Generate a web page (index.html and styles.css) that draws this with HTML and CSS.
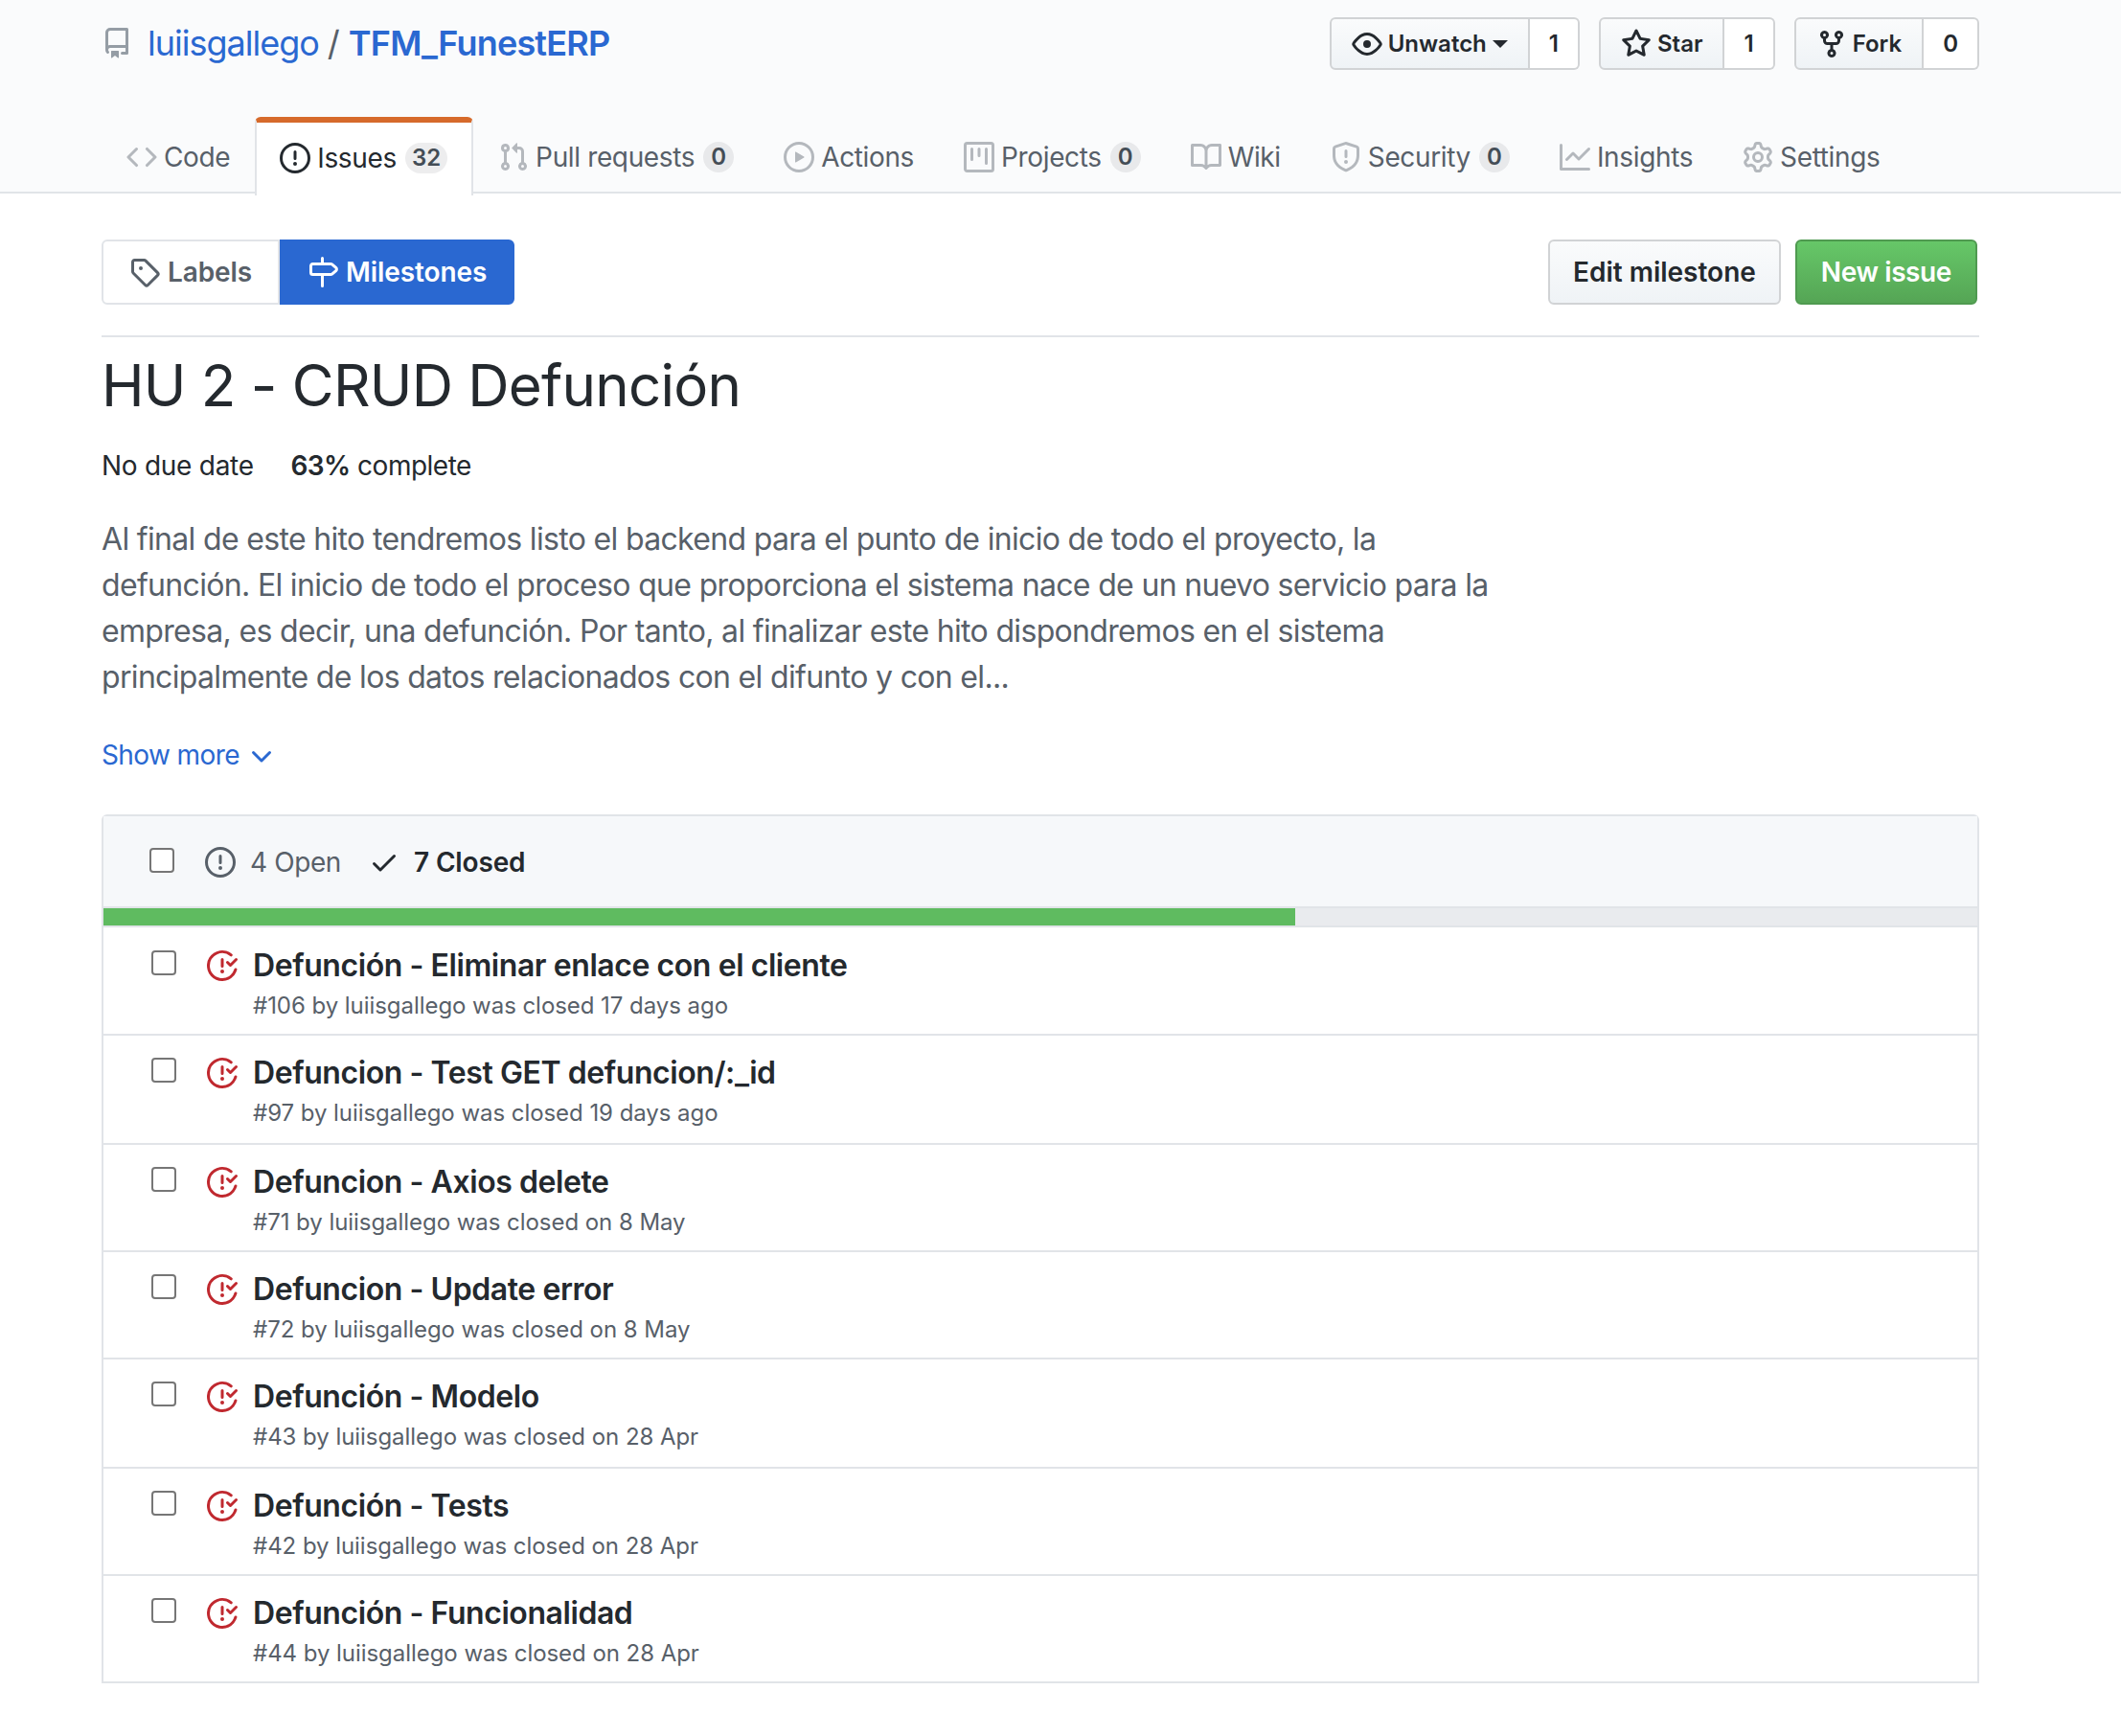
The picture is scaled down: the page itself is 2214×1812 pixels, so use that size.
FILE: index.html
```html
<!DOCTYPE html>
<html lang="en">
<head>
    <meta charset="UTF-8">
    <title>HU 2 - CRUD Defunción · luiisgallego/TFM_FunestERP</title>
    <link rel="stylesheet" href="styles.css">
</head>
<body>

    <svg class="sprites" xmlns="http://www.w3.org/2000/svg">
        <symbol id="i-repo" viewBox="0 0 16 16"><path fill-rule="evenodd" d="M2 2.5A2.5 2.5 0 014.5 0h8.75a.75.75 0 01.75.75v12.5a.75.75 0 01-.75.75h-2.5a.75.75 0 110-1.5h1.75v-2h-8a1 1 0 00-.714 1.7.75.75 0 01-1.072 1.05A2.495 2.495 0 012 11.5v-9zm10.5-1V9h-8c-.356 0-.694.074-1 .208V2.5a1 1 0 011-1h8zM5 12.25v3.25a.25.25 0 00.4.2l1.45-1.087a.25.25 0 01.3 0L8.6 15.7a.25.25 0 00.4-.2v-3.25a.25.25 0 00-.25-.25h-3.5a.25.25 0 00-.25.25z"/></symbol>
        <symbol id="i-code" viewBox="0 0 16 16"><path fill-rule="evenodd" d="M4.72 3.22a.75.75 0 011.06 1.06L2.06 8l3.72 3.72a.75.75 0 11-1.06 1.06L.47 8.53a.75.75 0 010-1.06l4.25-4.25zm6.56 0a.75.75 0 10-1.06 1.06L13.94 8l-3.72 3.72a.75.75 0 101.06 1.06l4.25-4.25a.75.75 0 000-1.06l-4.25-4.25z"/></symbol>
        <symbol id="i-issue" viewBox="0 0 16 16"><path fill-rule="evenodd" d="M8 1.5a6.5 6.5 0 100 13 6.5 6.5 0 000-13zM0 8a8 8 0 1116 0A8 8 0 010 8zm9 3a1 1 0 11-2 0 1 1 0 012 0zm-.25-6.25a.75.75 0 00-1.5 0v3.5a.75.75 0 001.5 0v-3.5z"/></symbol>
        <symbol id="i-pr" viewBox="0 0 16 16"><path fill-rule="evenodd" d="M7.177 3.073L9.573.677A.25.25 0 0110 .854v4.792a.25.25 0 01-.427.177L7.177 3.427a.25.25 0 010-.354zM3.75 2.5a.75.75 0 100 1.5.75.75 0 000-1.5zm-2.25.75a2.25 2.25 0 113 2.122v5.256a2.251 2.251 0 11-1.5 0V5.372A2.25 2.25 0 011.5 3.25zM11 2.5h-1V4h1a1 1 0 011 1v5.628a2.251 2.251 0 101.5 0V5A2.5 2.5 0 0011 2.5zm1 10.25a.75.75 0 111.5 0 .75.75 0 01-1.5 0zM3.75 12a.75.75 0 100 1.5.75.75 0 000-1.5z"/></symbol>
        <symbol id="i-play" viewBox="0 0 16 16"><path fill-rule="evenodd" d="M1.5 8a6.5 6.5 0 1113 0 6.5 6.5 0 01-13 0zM8 0a8 8 0 100 16A8 8 0 008 0zM6.379 5.227A.25.25 0 006 5.442v5.117a.25.25 0 00.379.214l4.264-2.559a.25.25 0 000-.428L6.379 5.227z"/></symbol>
        <symbol id="i-project" viewBox="0 0 16 16"><path fill-rule="evenodd" d="M1.75 0A1.75 1.75 0 000 1.75v12.5C0 15.216.784 16 1.75 16h12.5A1.75 1.75 0 0016 14.25V1.75A1.75 1.75 0 0014.25 0H1.75zM1.5 1.75a.25.25 0 01.25-.25h12.5a.25.25 0 01.25.25v12.5a.25.25 0 01-.25.25H1.75a.25.25 0 01-.25-.25V1.75zM11.75 3a.75.75 0 00-.75.75v7.5a.75.75 0 001.5 0v-7.5a.75.75 0 00-.75-.75zm-8.25.75a.75.75 0 011.5 0v5.5a.75.75 0 01-1.5 0v-5.5zM8 3a.75.75 0 00-.75.75v3.5a.75.75 0 001.5 0v-3.5A.75.75 0 008 3z"/></symbol>
        <symbol id="i-book" viewBox="0 0 16 16"><path fill-rule="evenodd" d="M0 1.75A.75.75 0 01.75 1h4.253c1.227 0 2.317.59 3 1.501A3.744 3.744 0 0111.006 1h4.245a.75.75 0 01.75.75v10.5a.75.75 0 01-.75.75h-4.507a2.25 2.25 0 00-1.591.659l-.622.621a.75.75 0 01-1.06 0l-.622-.621A2.25 2.25 0 005.258 13H.75a.75.75 0 01-.75-.75V1.75zm8.755 3a2.25 2.25 0 012.25-2.25H14.5v9h-3.757c-.71 0-1.4.201-1.992.572l.004-7.322zm-1.504 7.324l.004-5.073-.002-2.253A2.25 2.25 0 005.003 2.5H1.5v9h3.757a3.75 3.75 0 011.994.574z"/></symbol>
        <symbol id="i-shield" viewBox="0 0 16 16"><path fill-rule="evenodd" d="M7.467.133a1.75 1.75 0 011.066 0l5.25 1.68A1.75 1.75 0 0115 3.48V7c0 1.566-.32 3.182-1.303 4.682-.983 1.498-2.585 2.813-5.032 3.855a1.7 1.7 0 01-1.33 0c-2.447-1.042-4.049-2.357-5.032-3.855C1.32 10.182 1 8.566 1 7V3.48a1.75 1.75 0 011.217-1.667l5.25-1.68zm.61 1.429a.25.25 0 00-.153 0l-5.25 1.68a.25.25 0 00-.174.238V7c0 1.358.275 2.666 1.057 3.86.784 1.194 2.121 2.34 4.366 3.297a.2.2 0 00.154 0c2.245-.956 3.582-2.104 4.366-3.298C13.225 9.666 13.5 8.36 13.5 7V3.48a.25.25 0 00-.174-.237l-5.25-1.68zM9 10.5a1 1 0 11-2 0 1 1 0 012 0zm-.25-5.75a.75.75 0 10-1.5 0v3a.75.75 0 001.5 0v-3z"/></symbol>
        <symbol id="i-graph" viewBox="0 0 16 16"><path fill-rule="evenodd" d="M1.5 1.75a.75.75 0 00-1.5 0v12.5c0 .414.336.75.75.75h14.5a.75.75 0 000-1.5H1.5V1.75zm14.28 2.53a.75.75 0 00-1.06-1.06L10 7.94 7.53 5.47a.75.75 0 00-1.06 0L3.22 8.72a.75.75 0 001.06 1.06L7 7.06l2.47 2.47a.75.75 0 001.06 0l5.25-5.25z"/></symbol>
        <symbol id="i-gear" viewBox="0 0 16 16"><path fill-rule="evenodd" d="M7.429 1.525a6.593 6.593 0 011.142 0c.036.003.108.036.137.146l.289 1.105c.147.56.55.967.997 1.189.174.086.341.183.501.29.417.278.97.423 1.53.27l1.102-.303c.11-.03.175.016.195.046.219.31.41.641.573.989.014.031.022.11-.059.19l-.815.806c-.411.406-.562.957-.53 1.456a4.588 4.588 0 010 .582c-.032.499.119 1.05.53 1.456l.815.806c.08.08.073.159.059.19a6.494 6.494 0 01-.573.99c-.02.029-.086.074-.195.045l-1.103-.303c-.559-.153-1.112-.008-1.529.27-.16.107-.327.204-.5.29-.449.222-.851.628-.998 1.189l-.289 1.105c-.029.11-.101.143-.137.146a6.613 6.613 0 01-1.142 0c-.036-.003-.108-.037-.137-.146l-.289-1.105c-.147-.56-.55-.967-.997-1.189a4.502 4.502 0 01-.501-.29c-.417-.278-.97-.423-1.53-.27l-1.102.303c-.11.03-.175-.016-.195-.046a6.492 6.492 0 01-.573-.989c-.014-.031-.022-.11.059-.19l.815-.806c.411-.406.562-.957.53-1.456a4.587 4.587 0 010-.582c.032-.499-.119-1.05-.53-1.456l-.815-.806c-.08-.08-.073-.159-.059-.19a6.44 6.44 0 01.573-.99c.02-.029.086-.075.195-.045l1.103.303c.559.153 1.112.008 1.529-.27.16-.107.327-.204.5-.29.449-.222.851-.628.998-1.189l.289-1.105c.029-.11.101-.143.137-.146zM8 0c-.236 0-.47.01-.701.03-.743.065-1.29.615-1.458 1.261l-.29 1.106c-.017.066-.078.158-.211.224a5.994 5.994 0 00-.668.386c-.123.082-.233.09-.3.071L3.27 2.776c-.644-.177-1.392.02-1.82.63a7.977 7.977 0 00-.704 1.217c-.315.675-.111 1.422.363 1.891l.815.806c.05.048.098.147.088.294a6.084 6.084 0 000 .772c.01.147-.038.246-.088.294l-.815.806c-.474.469-.678 1.216-.363 1.891.2.428.436.835.704 1.218.428.609 1.176.806 1.82.63l1.103-.303c.066-.019.176-.011.299.071.213.143.436.272.668.386.133.066.194.158.212.224l.289 1.106c.169.646.715 1.196 1.458 1.26a8.094 8.094 0 001.402 0c.743-.064 1.29-.614 1.458-1.26l.29-1.106c.017-.066.078-.158.211-.224a5.98 5.98 0 00.668-.386c.123-.082.233-.09.3-.071l1.102.302c.644.177 1.392-.02 1.82-.63.268-.382.505-.789.704-1.217.315-.675.111-1.422-.364-1.891l-.814-.806c-.05-.048-.098-.147-.088-.294a6.1 6.1 0 000-.772c-.01-.147.039-.246.088-.294l.814-.806c.475-.469.679-1.216.364-1.891a7.992 7.992 0 00-.704-1.218c-.428-.609-1.176-.806-1.82-.63l-1.103.303c-.066.019-.176.011-.299-.071a5.991 5.991 0 00-.668-.386c-.133-.066-.194-.158-.212-.224L10.16 1.29C9.99.645 9.444.095 8.701.031A8.094 8.094 0 008 0zm1.5 8a1.5 1.5 0 11-3 0 1.5 1.5 0 013 0zM11 8a3 3 0 11-6 0 3 3 0 016 0z"/></symbol>
        <symbol id="i-eye" viewBox="0 0 16 16"><path fill-rule="evenodd" d="M1.679 7.932c.412-.621 1.242-1.75 2.366-2.717C5.175 4.242 6.527 3.5 8 3.5c1.473 0 2.824.742 3.955 1.715 1.124.967 1.954 2.096 2.366 2.717a.119.119 0 010 .136c-.412.621-1.242 1.75-2.366 2.717C10.825 11.758 9.473 12.5 8 12.5c-1.473 0-2.824-.742-3.955-1.715C2.92 9.818 2.09 8.69 1.679 8.068a.119.119 0 010-.136zM8 2c-1.981 0-3.67.992-4.933 2.078C1.797 5.169.88 6.423.43 7.1a1.619 1.619 0 000 1.798c.45.678 1.367 1.932 2.637 3.024C4.329 13.008 6.019 14 8 14c1.981 0 3.67-.992 4.933-2.078 1.27-1.091 2.187-2.345 2.637-3.023a1.619 1.619 0 000-1.798c-.45-.678-1.367-1.932-2.637-3.023C11.671 2.992 9.981 2 8 2zm0 8a2 2 0 100-4 2 2 0 000 4z"/></symbol>
        <symbol id="i-star" viewBox="0 0 16 16"><path fill-rule="evenodd" d="M8 .25a.75.75 0 01.673.418l1.882 3.815 4.21.612a.75.75 0 01.416 1.279l-3.046 2.97.719 4.192a.75.75 0 01-1.088.791L8 12.347l-3.766 1.98a.75.75 0 01-1.088-.79l.72-4.194L.818 6.374a.75.75 0 01.416-1.28l4.21-.611L7.327.668A.75.75 0 018 .25zm0 2.445L6.615 5.5a.75.75 0 01-.564.41l-3.097.45 2.24 2.184a.75.75 0 01.216.664l-.528 3.084 2.769-1.456a.75.75 0 01.698 0l2.77 1.456-.53-3.084a.75.75 0 01.216-.664l2.24-2.183-3.096-.45a.75.75 0 01-.564-.41L8 2.694v.001z"/></symbol>
        <symbol id="i-fork" viewBox="0 0 16 16"><path fill-rule="evenodd" d="M5 3.25a.75.75 0 11-1.5 0 .75.75 0 011.5 0zm0 2.122a2.25 2.25 0 10-1.5 0v.878A2.25 2.25 0 005.75 8.5h1.5v2.128a2.251 2.251 0 101.5 0V8.5h1.5a2.25 2.25 0 002.25-2.25v-.878a2.25 2.25 0 10-1.5 0v.878a.75.75 0 01-.75.75h-4.5A.75.75 0 015 6.25v-.878zm3.75 7.378a.75.75 0 11-1.5 0 .75.75 0 011.5 0zm3-8.75a.75.75 0 100-1.5.75.75 0 000 1.5z"/></symbol>
        <symbol id="i-tag" viewBox="0 0 16 16"><path fill-rule="evenodd" d="M2.5 7.775V2.75a.25.25 0 01.25-.25h5.025a.25.25 0 01.177.073l6.25 6.25a.25.25 0 010 .354l-5.025 5.025a.25.25 0 01-.354 0l-6.25-6.25a.25.25 0 01-.073-.177zm-1.5 0V2.75C1 1.784 1.784 1 2.75 1h5.025c.464 0 .91.184 1.238.513l6.25 6.25a1.75 1.75 0 010 2.474l-5.026 5.026a1.75 1.75 0 01-2.474 0l-6.25-6.25A1.75 1.75 0 011 7.775zM6 5a1 1 0 100 2 1 1 0 000-2z"/></symbol>
        <symbol id="i-milestone" viewBox="0 0 16 16"><path fill-rule="evenodd" d="M7.75 0a.75.75 0 01.75.75V3h3.634c.414 0 .814.147 1.13.414l2.07 1.75a1.75 1.75 0 010 2.672l-2.07 1.75a1.75 1.75 0 01-1.13.414H8.5v5.25a.75.75 0 11-1.5 0V10H2.75A1.75 1.75 0 011 8.25v-3.5C1 3.784 1.784 3 2.75 3H7V.75A.75.75 0 017.75 0zm0 8.5h4.384a.25.25 0 00.161-.06l2.07-1.75a.25.25 0 000-.38l-2.07-1.75a.25.25 0 00-.161-.06H2.75a.25.25 0 00-.25.25v3.5c0 .138.112.25.25.25h5z"/></symbol>
        <symbol id="i-chevron" viewBox="0 0 16 16"><path fill-rule="evenodd" d="M12.78 6.22a.75.75 0 010 1.06l-4.25 4.25a.75.75 0 01-1.06 0L3.22 7.28a.75.75 0 011.06-1.06L8 9.94l3.72-3.72a.75.75 0 011.06 0z"/></symbol>
        <symbol id="i-check" viewBox="0 0 16 16"><path fill-rule="evenodd" d="M13.78 4.22a.75.75 0 010 1.06l-7.25 7.25a.75.75 0 01-1.06 0L2.22 9.28a.75.75 0 011.06-1.06L6 10.94l6.72-6.72a.75.75 0 011.06 0z"/></symbol>
        <symbol id="i-closed" viewBox="0 0 16 16"><path fill-rule="evenodd" d="M1.5 8a6.5 6.5 0 0110.65-5.003.75.75 0 00.959-1.153 8 8 0 102.592 8.33.75.75 0 10-1.444-.407A6.5 6.5 0 011.5 8zM8 12a1 1 0 100-2 1 1 0 000 2zm0-8a.75.75 0 01.75.75v3.5a.75.75 0 11-1.5 0v-3.5A.75.75 0 018 4zm4.78 4.28l3-3a.75.75 0 00-1.06-1.06l-2.47 2.47-.97-.97a.749.749 0 10-1.06 1.06l1.5 1.5a.75.75 0 001.06 0z"/></symbol>
    </svg>

    <header class="pagehead">
        <div class="repo-row">
            <h2 class="repo-name">
                <svg class="icon repo-icon"><use href="#i-repo"/></svg>
                <a href="#" class="owner">luiisgallego</a>
                <span class="slash">/</span>
                <a href="#" class="strong">TFM_FunestERP</a>
            </h2>
            <ul class="repo-actions">
                <li class="action-group">
                    <a class="btn-sm" href="#"><svg class="icon"><use href="#i-eye"/></svg>Unwatch<span class="caret"></span></a>
                    <a class="social-count" href="#">1</a>
                </li>
                <li class="action-group">
                    <a class="btn-sm" href="#"><svg class="icon"><use href="#i-star"/></svg>Star</a>
                    <a class="social-count" href="#">1</a>
                </li>
                <li class="action-group">
                    <a class="btn-sm" href="#"><svg class="icon"><use href="#i-fork"/></svg>Fork</a>
                    <a class="social-count" href="#">0</a>
                </li>
            </ul>
        </div>
        <nav class="tabs">
            <a class="tab" href="#"><svg class="icon"><use href="#i-code"/></svg>Code</a>
            <a class="tab selected" href="#"><svg class="icon"><use href="#i-issue"/></svg>Issues<span class="counter">32</span></a>
            <a class="tab" href="#"><svg class="icon"><use href="#i-pr"/></svg>Pull requests<span class="counter">0</span></a>
            <a class="tab" href="#"><svg class="icon"><use href="#i-play"/></svg>Actions</a>
            <a class="tab" href="#"><svg class="icon"><use href="#i-project"/></svg>Projects<span class="counter">0</span></a>
            <a class="tab" href="#"><svg class="icon"><use href="#i-book"/></svg>Wiki</a>
            <a class="tab" href="#"><svg class="icon"><use href="#i-shield"/></svg>Security<span class="counter">0</span></a>
            <a class="tab" href="#"><svg class="icon"><use href="#i-graph"/></svg>Insights</a>
            <a class="tab" href="#"><svg class="icon"><use href="#i-gear"/></svg>Settings</a>
        </nav>
    </header>

    <main class="container">
        <div class="subnav">
            <div class="subnav-links">
                <a class="subnav-item" href="#"><svg class="icon"><use href="#i-tag"/></svg>Labels</a>
                <a class="subnav-item selected" href="#"><svg class="icon"><use href="#i-milestone"/></svg>Milestones</a>
            </div>
            <div class="subnav-buttons">
                <a class="btn" href="#">Edit milestone</a>
                <a class="btn btn-primary" href="#">New issue</a>
            </div>
        </div>

        <h1 class="milestone-title">HU 2 - CRUD Defunción</h1>
        <p class="milestone-meta">No due date <span class="complete"><strong>63%</strong> complete</span></p>
        <p class="milestone-desc">Al final de este hito tendremos listo el backend para el punto de inicio de todo el proyecto, la defunción. El inicio de todo el proceso que proporciona el sistema nace de un nuevo servicio para la empresa, es decir, una defunción. Por tanto, al finalizar este hito dispondremos en el sistema principalmente de los datos relacionados con el difunto y con el...</p>
        <a class="show-more" href="#">Show more <svg class="icon"><use href="#i-chevron"/></svg></a>

        <section class="issues-box">
            <div class="box-header">
                <input type="checkbox" class="check">
                <a class="state" href="#"><svg class="icon"><use href="#i-issue"/></svg>4 Open</a>
                <a class="state selected" href="#"><svg class="icon"><use href="#i-check"/></svg>7 Closed</a>
            </div>
            <div class="progress"><span class="progress-bar" style="width: 63.6%"></span></div>

            <div class="issue">
                <input type="checkbox" class="check">
                <svg class="icon closed-icon"><use href="#i-closed"/></svg>
                <div class="issue-text">
                    <a class="issue-title" href="#">Defunción - Eliminar enlace con el cliente</a>
                    <div class="issue-meta">#106 by luiisgallego was closed 17 days ago</div>
                </div>
            </div>
            <div class="issue">
                <input type="checkbox" class="check">
                <svg class="icon closed-icon"><use href="#i-closed"/></svg>
                <div class="issue-text">
                    <a class="issue-title" href="#">Defuncion - Test GET defuncion/:_id</a>
                    <div class="issue-meta">#97 by luiisgallego was closed 19 days ago</div>
                </div>
            </div>
            <div class="issue short">
                <input type="checkbox" class="check">
                <svg class="icon closed-icon"><use href="#i-closed"/></svg>
                <div class="issue-text">
                    <a class="issue-title" href="#">Defuncion - Axios delete</a>
                    <div class="issue-meta">#71 by luiisgallego was closed on 8 May</div>
                </div>
            </div>
            <div class="issue short">
                <input type="checkbox" class="check">
                <svg class="icon closed-icon"><use href="#i-closed"/></svg>
                <div class="issue-text">
                    <a class="issue-title" href="#">Defuncion - Update error</a>
                    <div class="issue-meta">#72 by luiisgallego was closed on 8 May</div>
                </div>
            </div>
            <div class="issue">
                <input type="checkbox" class="check">
                <svg class="icon closed-icon"><use href="#i-closed"/></svg>
                <div class="issue-text">
                    <a class="issue-title" href="#">Defunción - Modelo</a>
                    <div class="issue-meta">#43 by luiisgallego was closed on 28 Apr</div>
                </div>
            </div>
            <div class="issue short">
                <input type="checkbox" class="check">
                <svg class="icon closed-icon"><use href="#i-closed"/></svg>
                <div class="issue-text">
                    <a class="issue-title" href="#">Defunción - Tests</a>
                    <div class="issue-meta">#42 by luiisgallego was closed on 28 Apr</div>
                </div>
            </div>
            <div class="issue short">
                <input type="checkbox" class="check">
                <svg class="icon closed-icon"><use href="#i-closed"/></svg>
                <div class="issue-text">
                    <a class="issue-title" href="#">Defunción - Funcionalidad</a>
                    <div class="issue-meta">#44 by luiisgallego was closed on 28 Apr</div>
                </div>
            </div>
        </section>
    </main>

</body>
</html>
```

FILE: styles.css
```css
html, body {
    margin: 0;
    padding: 0;
}

body {
    font-family: 'Inter', 'Liberation Sans', sans-serif;
    font-size: 28px;
    color: #24292e;
    background: #fff;
}

a {
    color: inherit;
    text-decoration: none;
}

.sprites {
    display: none;
}

.icon {
    width: 32px;
    height: 32px;
    fill: currentColor;
    flex-shrink: 0;
}

/* repo header */
.pagehead {
    background: #fafbfc;
    border-bottom: 2px solid #e1e4e8;
    height: 202px;
    box-sizing: border-box;
    padding: 18px 148px 0 106px;
}

.repo-row {
    display: flex;
    justify-content: space-between;
    height: 104px;
}

.repo-name {
    display: flex;
    align-items: center;
    height: 54px;
    margin: 0;
    font-size: 36px;
    font-weight: 400;
    color: #2a68d1;
}

.repo-icon {
    color: #959da5;
    margin-right: 16px;
}

.owner {
    letter-spacing: -1px;
}

.repo-name .strong {
    font-weight: 600;
    letter-spacing: -0.8px;
}

.slash {
    color: #586069;
    margin: 0 9px;
}

.repo-actions {
    display: flex;
    gap: 20px;
    list-style: none;
    margin: 0;
    padding: 0;
}

.action-group {
    display: flex;
    height: 55px;
    font-size: 24px;
    font-weight: 600;
}

.btn-sm {
    display: flex;
    align-items: center;
    gap: 6px;
    padding: 0 21px;
    background: linear-gradient(#fafbfc, #eff3f6);
    border: 2px solid #d1d3d5;
    border-radius: 6px 0 0 6px;
}

.caret {
    width: 0;
    height: 0;
    border: 8px solid transparent;
    border-top-color: #24292e;
    border-bottom: 0;
}

.social-count {
    display: flex;
    align-items: center;
    padding: 0 20px;
    background: #fff;
    border: 2px solid #d1d3d5;
    border-left: 0;
    border-radius: 0 6px 6px 0;
}

.tabs {
    display: flex;
    height: 80px;
}

.tab {
    display: flex;
    align-items: center;
    box-sizing: border-box;
    height: 80px;
    padding: 4px 26px 0;
    color: #586069;
    letter-spacing: -0.36px;
}

.tab .icon {
    color: #b4b8bd;
    margin-right: 7px;
}

.tab.selected {
    height: 82px;
    padding: 0 25px 2px 24px;
    background: #fff;
    color: #24292e;
    border: 2px solid #e1e4e8;
    border-top: 6px solid #d66a2b;
    border-bottom: 0;
    border-radius: 6px 6px 0 0;
}

.tab.selected .icon {
    color: #24292e;
}

.counter {
    display: inline-block;
    min-width: 32px;
    box-sizing: border-box;
    height: 32px;
    line-height: 32px;
    margin-left: 9px;
    padding: 0 7px;
    background: rgba(27, 31, 35, 0.08);
    border-radius: 40px;
    font-size: 24px;
    font-weight: 600;
    letter-spacing: 0;
    text-align: center;
    color: #444d56;
}

/* milestone page */
.container {
    margin: 0 148px 0 106px;
}

.subnav {
    display: flex;
    justify-content: space-between;
    padding-top: 48px;
    padding-bottom: 32px;
    border-bottom: 2px solid #e1e4e8;
}

.subnav-links {
    display: flex;
    height: 68px;
    font-weight: 600;
}

.subnav-item {
    display: flex;
    align-items: center;
    gap: 8px;
    padding: 0 27px;
    color: #586069;
    border: 2px solid #e1e4e8;
    border-radius: 6px 0 0 6px;
    letter-spacing: -0.1px;
}

.subnav-item.selected {
    color: #fff;
    background: #2a68d1;
    border-color: #2a68d1;
    border-radius: 0 6px 6px 0;
}

.subnav-buttons {
    display: flex;
    gap: 15px;
    margin-right: 2px;
}

.btn {
    display: flex;
    align-items: center;
    box-sizing: border-box;
    height: 68px;
    padding: 0 24px;
    font-weight: 600;
    background: linear-gradient(#fafbfc, #eff3f6);
    border: 2px solid #d1d3d5;
    border-radius: 6px;
}

.btn-primary {
    padding: 0 25px;
    color: #fff;
    background: linear-gradient(#66c768, #55a555);
    border-color: #4f9a50;
    letter-spacing: -0.4px;
}

.milestone-title {
    margin: 15px 0 0;
    font-size: 60px;
    line-height: 70px;
    font-weight: 400;
    letter-spacing: -0.75px;
}

.milestone-meta {
    margin: 29px 0 0;
    line-height: 40px;
    letter-spacing: -0.27px;
}

.complete {
    margin-left: 31px;
    letter-spacing: -0.5px;
}

.complete strong {
    font-weight: 600;
}

.milestone-desc {
    width: 1460px;
    margin: 33px 0 0;
    font-size: 32px;
    line-height: 48px;
    letter-spacing: -0.67px;
    color: #586069;
}

.show-more {
    display: inline-flex;
    align-items: center;
    gap: 7px;
    margin-top: 37px;
    line-height: 40px;
    letter-spacing: -0.6px;
    color: #2a68d1;
}

/* issue list */
.issues-box {
    margin-top: 42px;
    border: 2px solid #e1e4e8;
    border-bottom: 0;
    border-radius: 6px 6px 0 0;
}

.box-header {
    display: flex;
    align-items: center;
    height: 94px;
    padding: 1px 0 0 48px;
    box-sizing: border-box;
    background: #f6f8fa;
}

.check {
    appearance: none;
    width: 26px;
    height: 26px;
    margin: 0;
    background: #fff;
    border: 2px solid #767676;
    border-radius: 4px;
    box-sizing: border-box;
    flex-shrink: 0;
}

.box-header .check {
    margin-top: -4px;
}

.state {
    display: flex;
    align-items: center;
    gap: 15px;
    margin-left: 32px;
    color: #586069;
    letter-spacing: -0.4px;
}

.state.selected {
    color: #24292e;
    font-weight: 600;
    margin-left: 29px;
    letter-spacing: -0.15px;
}

.progress {
    height: 22px;
    background: #e9ebee;
    border-top: 2px solid #e1e4e8;
    border-bottom: 2px solid #e1e4e8;
    box-sizing: border-box;
}

.progress-bar {
    display: block;
    height: 18px;
    background: #5fbb60;
}

.issue {
    display: flex;
    align-items: flex-start;
    box-sizing: border-box;
    height: 114px;
    padding: 17px 0 0 50px;
    border-bottom: 2px solid #e1e4e8;
}

.progress + .issue {
    height: 113px;
    padding-top: 18px;
}

.issue.short {
    height: 112px;
}

.issue .check {
    margin-top: 6px;
}

.closed-icon {
    color: #c0292f;
    margin: 6px 16px 0 32px;
}

.issue-title {
    display: block;
    font-size: 32px;
    line-height: 44px;
    font-weight: 600;
    letter-spacing: -0.43px;
}

.issue-meta {
    margin-top: 4px;
    font-size: 24px;
    line-height: 32px;
    letter-spacing: -0.05px;
    color: #586069;
}
```
